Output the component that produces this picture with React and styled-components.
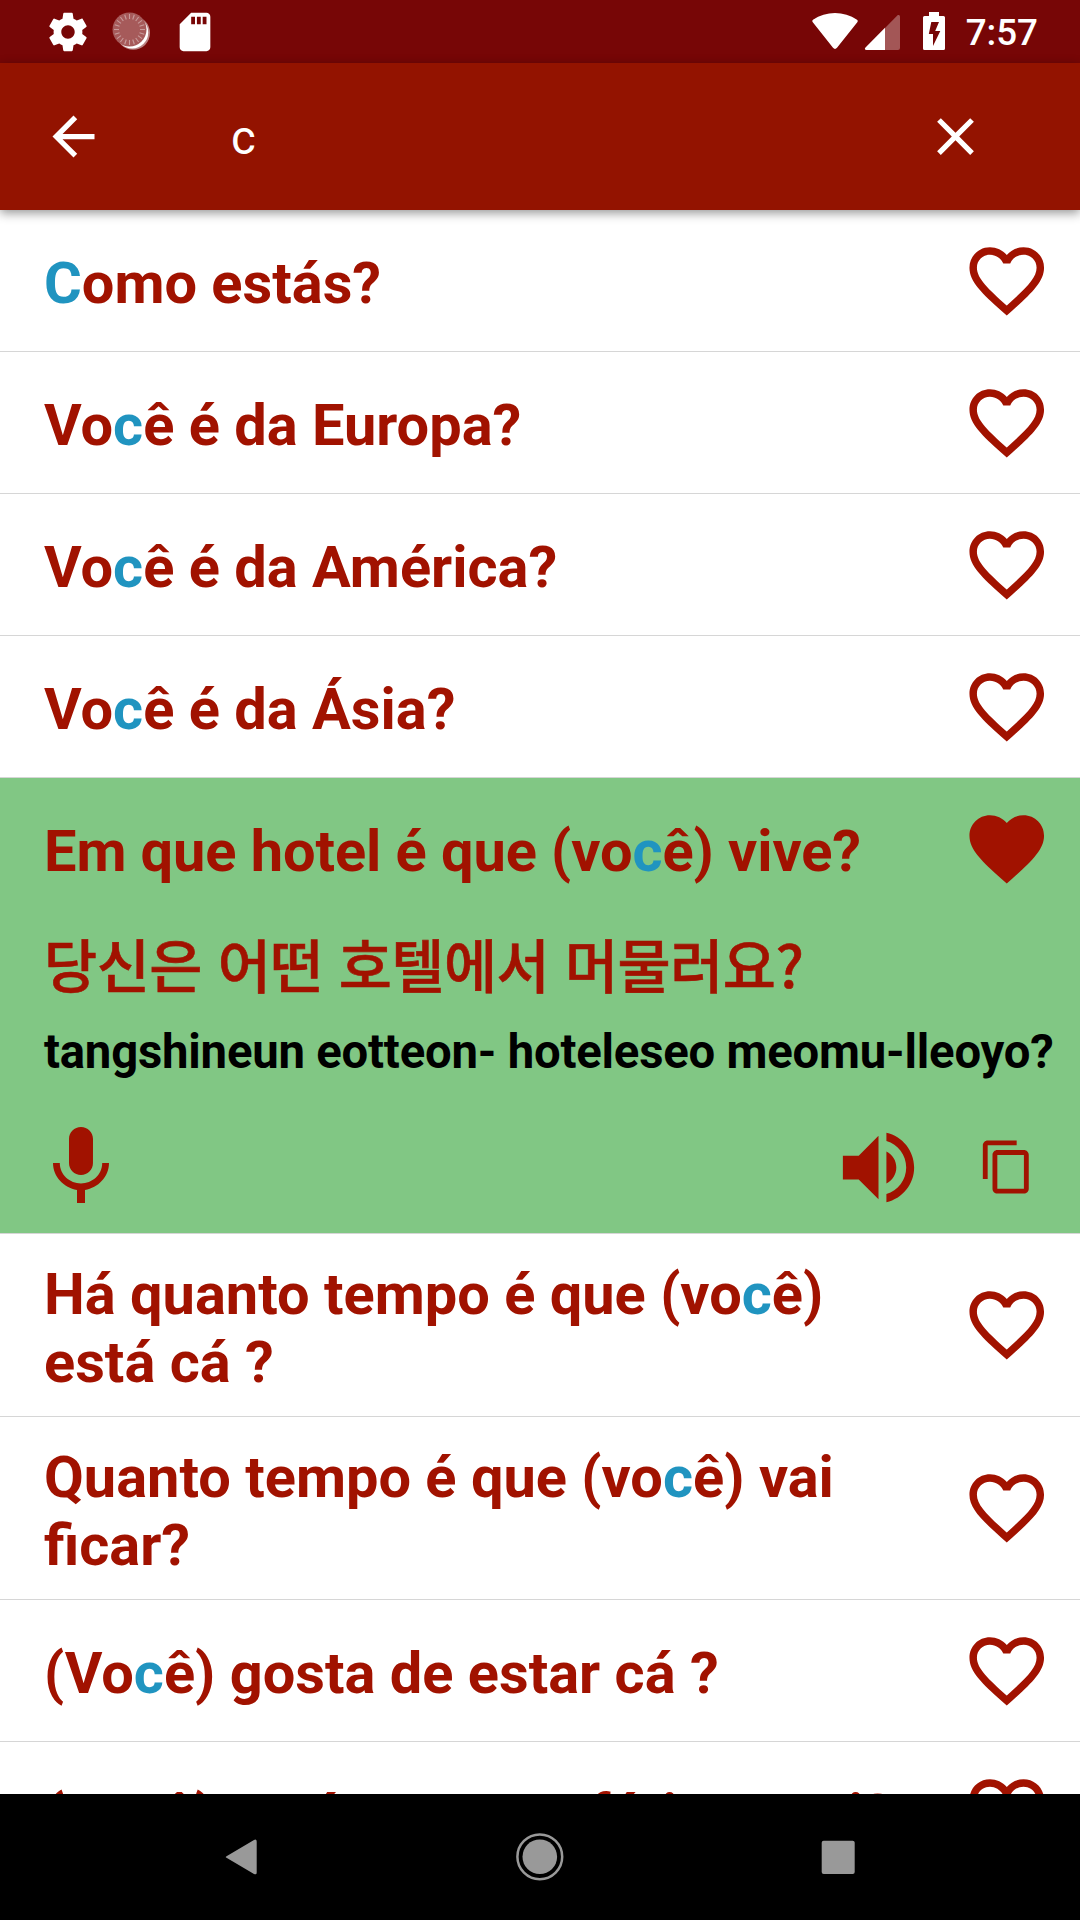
import React from "react";
import styled, { createGlobalStyle, css } from "styled-components";

const colors = {
  statusBar: "#770606",
  appBar: "#931300",
  text: "#a11200",
  highlight: "#2094c0",
  selected: "#81c784",
  divider: "#d6d6d6",
  nav: "#999999",
};

const GlobalStyle = createGlobalStyle`
  * {
    box-sizing: border-box;
  }
  body {
    margin: 0;
    background: #ffffff;
    font-family: Roboto, "Noto Sans", sans-serif;
  }
`;

const Screen = styled.div`
  display: flex;
  flex-direction: column;
  width: 1080px;
  height: 1920px;
  overflow: hidden;
  background: #ffffff;
`;

const StatusBar = styled.header`
  display: flex;
  flex: none;
  justify-content: space-between;
  height: 63px;
  padding: 0 42px 0 45px;
  background: ${colors.statusBar};
`;

const StatusGroup = styled.div`
  display: flex;
`;

const Clock = styled.span`
  margin-left: 20px;
  color: #ffffff;
  font-size: 36.75px;
  font-weight: 500;
  line-height: 66px;
`;

const AppBar = styled.div`
  display: flex;
  flex: none;
  align-items: center;
  height: 147px;
  padding: 0 93px 0 42px;
  background: ${colors.appBar};
  box-shadow: 0 3px 10px rgba(0, 0, 0, 0.42);
  z-index: 1;
`;

const Query = styled.span`
  flex: 1;
  padding: 3px 0 0 126px;
  color: #ffffff;
  font-size: 47.25px;
  line-height: 56px;
`;

const Icon = styled.svg`
  display: block;
  flex: none;
  width: ${(props) => props.$size}px;
  height: ${(props) => props.$size}px;
  fill: ${(props) => props.$color || colors.text};
`;

const List = styled.ul`
  flex: 1;
  min-height: 0;
  margin: 0;
  padding: 0;
  overflow: hidden;
  list-style: none;
`;

const Item = styled.li`
  border-bottom: 1px solid ${colors.divider};
  ${(props) =>
    props.$selected &&
    css`
      height: 456px;
      background: ${colors.selected};
      letter-spacing: -0.08px;
    `}
`;

const ItemHead = styled.div`
  display: flex;
  align-items: center;
  justify-content: space-between;
  padding: 0 28.5px 0 44px;
`;

const Phrase = styled.div`
  width: 880px;
  padding: ${(props) => (props.$wrapped ? "26px 0 20px" : "39px 0 34px")};
  color: ${colors.text};
  font-size: 57.75px;
  font-weight: 700;
  line-height: 68px;
`;

const Mark = styled.span`
  color: ${colors.highlight};
`;

const Translation = styled.div`
  padding: 4px 0 0 44px;
  color: ${colors.text};
  font-family: "Noto Sans CJK KR", sans-serif;
  font-size: 57.75px;
  font-weight: 500;
  letter-spacing: -0.48px;
  line-height: 80px;
  white-space: nowrap;
  -webkit-text-stroke: 0.6px ${colors.text};
`;

const Romanization = styled.div`
  padding: 21px 0 0 44px;
  color: #000000;
  font-size: 47.25px;
  font-weight: 700;
  letter-spacing: -0.2px;
  line-height: 56px;
  white-space: nowrap;
`;

const Actions = styled.div`
  display: flex;
  align-items: center;
  height: 96px;
  margin-top: 39px;
  padding: 0 44px 0 33px;
`;

const Playback = styled.div`
  display: flex;
  align-items: center;
  gap: 52px;
  margin-left: auto;
`;

const NavBar = styled.nav`
  display: flex;
  flex: none;
  align-items: center;
  justify-content: space-between;
  height: 126px;
  padding: 0 210px;
  background: #000000;
`;

const HEART =
  "M12 21.35l-1.45-1.32C5.4 15.36 2 12.28 2 8.5 2 5.42 4.42 3 7.5 3c1.74 0 3.41.81 4.5 2.09C13.09 3.81 14.76 3 16.5 3 19.58 3 22 5.42 22 8.5c0 3.78-3.4 6.86-8.55 11.54L12 21.35z";
const HEART_OUTLINE =
  "M12.1 18.55l-.1.1-.11-.1C7.14 14.24 4 11.39 4 8.5 4 6.5 5.5 5 7.5 5c1.54 0 3.04 1 3.57 2.36h1.86C13.46 6 14.96 5 16.5 5c2 0 3.5 1.5 3.5 3.5 0 2.89-3.14 5.74-7.9 10.05M16.5 3c-1.74 0-3.41.81-4.5 2.08C10.91 3.81 9.24 3 7.5 3 4.42 3 2 5.41 2 8.5c0 3.77 3.4 6.86 8.55 11.53L12 21.35l1.45-1.32C18.6 15.36 22 12.27 22 8.5 22 5.41 19.58 3 16.5 3z";
const MIC =
  "M12 14c1.66 0 2.99-1.34 2.99-3L15 5c0-1.66-1.34-3-3-3S9 3.34 9 5v6c0 1.66 1.34 3 3 3zm5.3-3c0 3-2.54 5.1-5.3 5.1S6.7 14 6.7 11H5c0 3.41 2.72 6.23 6 6.72V21h2v-3.28c3.28-.48 6-3.3 6-6.72h-1.7z";
const VOLUME =
  "M3 9v6h4l5 5V4L7 9H3zm13.5 3c0-1.77-1.02-3.29-2.5-4.03v8.05c1.48-.73 2.5-2.25 2.5-4.02zM14 3.23v2.06c2.89.86 5 3.54 5 6.71s-2.11 5.85-5 6.71v2.06c4.01-.91 7-4.49 7-8.77s-2.99-7.86-7-8.77z";
const COPY =
  "M16 1H4c-1.1 0-2 .9-2 2v14h2V3h12V1zm3 4H8c-1.1 0-2 .9-2 2v14c0 1.1.9 2 2 2h11c1.1 0 2-.9 2-2V7c0-1.1-.9-2-2-2zm0 16H8V7h11v14z";
const ARROW_BACK = "M20 11H7.83l5.59-5.59L12 4l-8 8 8 8 1.41-1.41L7.83 13H20v-2z";
const CLOSE =
  "M19 6.41L17.59 5 12 10.59 6.41 5 5 6.41 10.59 12 5 17.59 6.41 19 12 13.41 17.59 19 19 17.59 13.41 12z";
const SETTINGS =
  "M19.43 12.98c.04-.32.07-.64.07-.98s-.03-.66-.07-.98l2.11-1.65c.19-.15.24-.42.12-.64l-2-3.46c-.12-.22-.39-.3-.61-.22l-2.49 1c-.52-.4-1.08-.73-1.69-.98l-.38-2.65C14.46 2.18 14.25 2 14 2h-4c-.25 0-.46.18-.49.42l-.38 2.65c-.61.25-1.17.59-1.69.98l-2.49-1c-.23-.09-.49 0-.61.22l-2 3.46c-.13.22-.07.49.12.64l2.11 1.65c-.04.32-.07.65-.07.98s.03.66.07.98l-2.11 1.65c-.19.15-.24.42-.12.64l2 3.46c.12.22.39.3.61.22l2.49-1c.52.4 1.08.73 1.69.98l.38 2.65c.03.24.24.42.49.42h4c.25 0 .46-.18.49-.42l.38-2.65c.61-.25 1.17-.59 1.69-.98l2.49 1c.23.09.49 0 .61-.22l2-3.46c.12-.22.07-.49-.12-.64l-2.11-1.65zM12 15.5c-1.93 0-3.5-1.57-3.5-3.5s1.57-3.5 3.5-3.5 3.5 1.57 3.5 3.5-1.57 3.5-3.5 3.5z";
const SD_CARD =
  "M18 2h-8L4.02 8 4 20c0 1.1.9 2 2 2h12c1.1 0 2-.9 2-2V4c0-1.1-.9-2-2-2zm-6 6h-2V4h2v4zm3 0h-2V4h2v4zm3 0h-2V4h2v4z";

const MaterialIcon = ({ path, size, color }) => (
  <Icon viewBox="0 0 24 24" $size={size} $color={color}>
    <path d={path} />
  </Icon>
);

const SpinnerIcon = () => (
  <svg width="63" height="63" viewBox="0 0 63 63">
    <circle cx="33.2" cy="33" r="16.8" fill="#b98282" />
    <circle cx="32.2" cy="32.4" r="16" fill="#ffffff" />
    <circle cx="29.5" cy="29.5" r="17" fill="#a65a5a" />
    {Array.from({ length: 20 }, (_, i) => (
      <line
        key={i}
        x1="29.5"
        y1="14"
        x2="29.5"
        y2="19"
        stroke="#c89c9c"
        strokeWidth="1.1"
        transform={`rotate(${i * 18} 29.5 29.5)`}
      />
    ))}
  </svg>
);

const SignalIcons = () => (
  <svg width="136" height="63" viewBox="810 0 136 63">
    <path
      d="M812.8 22.2C812 21.4 812.2 20.4 813 19.8C826 10.8 844 10.8 857 19.8C857.9 20.4 858 21.4 857.3 22.2L837 47.8C835.8 49.3 834.2 49.3 833 47.8Z"
      fill="#ffffff"
    />
    <path
      d="M885 28L897.3 15.6C898.4 14.6 900 15.2 900 16.8V48Q900 50 898 50H885Z"
      fill="#a35656"
    />
    <path d="M885 27.8V50H866.5C864.8 50 864.4 48.4 865.5 47.4Z" fill="#ffffff" />
    <path
      fillRule="evenodd"
      d="M929 12H939V16H943.5Q945 16 945 17.5V48.5Q945 50 943.5 50H924.5Q923 50 923 48.5V17.5Q923 16 924.5 16H929ZM931.3 22L928.8 34H933V46L940.3 31H935.2L939 22Z"
      fill="#ffffff"
    />
  </svg>
);

const phrases = [
  { text: "Como estás?" },
  { text: "Você é da Europa?" },
  { text: "Você é da América?" },
  { text: "Você é da Ásia?" },
  {
    text: "Em que hotel é que (você) vive?",
    translation: "당신은 어떤 호텔에서 머물러요?",
    romanization: "tangshineun eotteon- hoteleseo meomu-lleoyo?",
    favorite: true,
  },
  { text: "Há quanto tempo é que (você) está cá ?", wrapped: true },
  { text: "Quanto tempo é que (você) vai ficar?", wrapped: true },
  { text: "(Você) gosta de estar cá ?" },
  { text: "(Você) está a passar férias aqui?" },
];

// only the first match of the query is coloured
const Highlighted = ({ text, query }) => {
  const at = text.toLowerCase().indexOf(query);
  if (at < 0) return text;
  return (
    <>
      {text.slice(0, at)}
      <Mark>{text.slice(at, at + query.length)}</Mark>
      {text.slice(at + query.length)}
    </>
  );
};

const PhraseItem = ({ phrase, query }) => (
  <Item $selected={!!phrase.translation}>
    <ItemHead>
      <Phrase $wrapped={phrase.wrapped}>
        <Highlighted text={phrase.text} query={query} />
      </Phrase>
      <MaterialIcon path={phrase.favorite ? HEART : HEART_OUTLINE} size={89.5} />
    </ItemHead>
    {phrase.translation && (
      <>
        <Translation lang="ko">{phrase.translation}</Translation>
        <Romanization>{phrase.romanization}</Romanization>
        <Actions>
          <MaterialIcon path={MIC} size={96} />
          <Playback>
            <MaterialIcon path={VOLUME} size={95} />
            <MaterialIcon path={COPY} size={58} />
          </Playback>
        </Actions>
      </>
    )}
  </Item>
);

const StatusIcons = styled(StatusGroup)`
  align-items: center;
  gap: 9px;
`;

const App = () => {
  const query = "c";

  return (
    <Screen>
      <GlobalStyle />
      <StatusBar>
        <StatusIcons>
          <MaterialIcon path={SETTINGS} size={46} color="#ffffff" />
          <SpinnerIcon />
          <MaterialIcon path={SD_CARD} size={46} color="#ffffff" />
        </StatusIcons>
        <StatusGroup>
          <SignalIcons />
          <Clock>7:57</Clock>
        </StatusGroup>
      </StatusBar>
      <AppBar>
        <MaterialIcon path={ARROW_BACK} size={63} color="#ffffff" />
        <Query>{query}</Query>
        <MaterialIcon path={CLOSE} size={63} color="#ffffff" />
      </AppBar>
      <List>
        {phrases.map((phrase) => (
          <PhraseItem key={phrase.text} phrase={phrase} query={query} />
        ))}
      </List>
      <NavBar>
        <svg width="63" height="63" viewBox="0 0 63 63" fill={colors.nav}>
          <path d="M16.5 30.2L44 13.9Q46.7 12.7 46.7 15.5V46.5Q46.7 49.3 44 47.9L16.5 31.8Q15 31 16.5 30.2Z" />
        </svg>
        <svg width="63" height="63" viewBox="0 0 63 63" fill={colors.nav}>
          <circle cx="30.8" cy="30.8" r="22.4" fill="none" stroke={colors.nav} strokeWidth="2.5" />
          <circle cx="30.8" cy="30.8" r="17.3" />
        </svg>
        <svg width="63" height="63" viewBox="0 0 63 63" fill={colors.nav}>
          <rect x="14.7" y="14.8" width="33" height="33.3" rx="2" />
        </svg>
      </NavBar>
    </Screen>
  );
};

export default App;
